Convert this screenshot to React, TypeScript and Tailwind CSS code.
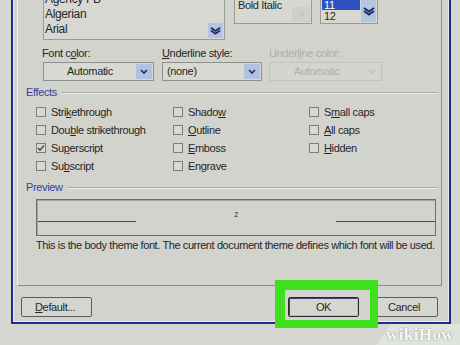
import type { ReactNode } from 'react';

const u = (s: string) => <span className="underline">{s}</span>;

function Arrow({ disabled }: { disabled?: boolean }) {
  return (
    <svg width="8" height="5" viewBox="0 0 8 5">
      <path
        d="M1 1 L4 4 L7 1"
        fill="none"
        stroke={disabled ? '#c3c3bf' : '#1c2c6a'}
        strokeWidth="1.6"
      />
    </svg>
  );
}

function DoubleChevron({ w, h }: { w: number; h: number }) {
  return (
    <svg width={w} height={h} viewBox="0 0 12 9">
      <path d="M1 1.5 L6 5 L11 1.5" fill="none" stroke="#1d2b66" strokeWidth="2" />
      <path d="M1 4.5 L6 8 L11 4.5" fill="none" stroke="#1d2b66" strokeWidth="2" />
    </svg>
  );
}

function Dropdown({
  width,
  text,
  center,
  disabled,
}: {
  width: string;
  text: string;
  center?: boolean;
  disabled?: boolean;
}) {
  return (
    <div
      className={`${width} h-[19px] flex border ${
        disabled ? 'border-[#c2c2bd] bg-[#d5d5cf]' : 'border-[#8f8f8b] bg-[#d9d9d3]'
      }`}
    >
      <div
        className={`flex-1 leading-[17px] ${center ? 'text-center' : 'pl-[4px]'} ${
          disabled ? 'text-[#aeaeaa]' : 'text-[#262626]'
        }`}
      >
        {text}
      </div>
      <div
        className={`w-[16px] my-px mr-px flex items-center justify-center ${
          disabled ? '' : 'bg-[#b2c0e2]'
        }`}
      >
        <Arrow disabled={disabled} />
      </div>
    </div>
  );
}

function Check({ label, checked }: { label: ReactNode; checked?: boolean }) {
  return (
    <div className="flex items-center h-[18px]">
      <div className="w-[10px] h-[10px] border border-[#7c7c78] bg-[#d9d9d3] flex items-center justify-center">
        {checked && (
          <svg width="8" height="8" viewBox="0 0 8 8">
            <path d="M1 4 L3 6.2 L7 1.5" fill="none" stroke="#2a5a2a" strokeWidth="1.5" />
          </svg>
        )}
      </div>
      <span className="ml-[5px] text-[#262626]">{label}</span>
    </div>
  );
}

function Heading({ text }: { text: string }) {
  return (
    <div className="h-[13px] flex items-center pl-[8px] pr-[3px]">
      <span className="text-[#37409a] leading-[13px]">{text}</span>
      <div className="flex-1 ml-[5px] border-t border-b border-t-[#abaaa5] border-b-[#ecece8]" />
    </div>
  );
}

export default function App() {
  return (
    <div className="w-[460px] h-[345px] overflow-hidden relative bg-[#d6d6d3] font-['Liberation_Sans',Arial,sans-serif] text-[11px] tracking-[-0.35px]">
      <div className="ml-[11px] w-[440px] h-[324px] border-x-2 border-b-2 border-[#202c8c] bg-[#d3d3cd]">
        <div className="h-full border-x border-b border-[#ebebe7] flex flex-col pl-[3px] pr-[6px]">
          {/* tab page */}
          <div className="h-[286px] border-l border-r border-b border-l-[#f0f0ec] border-r-[#8c8c88] border-b-[#8c8c88] flex flex-col">
            {/* font / style / size */}
            <div className="h-[40px] flex items-start">
              <div className="ml-[25px] w-[182px] h-[40px] border-x border-b border-[#9a9a96] bg-[#d8d8d2] flex overflow-hidden">
                <div className="flex-1 -mt-[8px] pl-[1px] text-[12px] text-[#262626]">
                  <div className="h-[15px] leading-[15px]">Agency FB</div>
                  <div className="h-[15px] leading-[15px]">Algerian</div>
                  <div className="h-[15px] leading-[15px]">Arial</div>
                </div>
                <div className="w-[15px] mr-px flex flex-col justify-end pb-px">
                  <div className="h-[15px] bg-[#b6c3e2] flex items-center justify-center">
                    <DoubleChevron w={11} h={9} />
                  </div>
                </div>
              </div>
              <div className="ml-[9px] w-[78px] h-[24px] border-x border-b border-[#9a9a96] bg-[#d8d8d2] flex">
                <div className="flex-1 pl-[3px] leading-[11px] text-[#262626]">Bold Italic</div>
                <div className="w-[18px] h-[15px] mt-[7px] mr-px bg-[#d0d0ca] flex items-center justify-center">
                  <Arrow disabled />
                </div>
              </div>
              <div className="ml-[8px] w-[58px] h-[24px] border-x border-b border-[#9a9a96] bg-[#d8d8d2] flex">
                <div className="flex-1 pl-px">
                  <div className="h-[10px] bg-[#2d52bf] text-white leading-[10px] pl-[2px] mr-px">11</div>
                  <div className="h-[13px] leading-[13px] pl-[2px] text-[#262626]">12</div>
                </div>
                <div className="w-[15px] h-[22px] mr-px bg-[#b6c3e2] flex items-center justify-center">
                  <DoubleChevron w={12} h={10} />
                </div>
              </div>
            </div>

            {/* labels */}
            <div className="mt-[7px] h-[13px] flex leading-[13px]">
              <div className="ml-[24px] w-[120px] text-[#262626]">
                Font c{u('o')}lor:
              </div>
              <div className="w-[107px] text-[#262626]">{u('U')}nderline style:</div>
              <div className="text-[#aeaeaa]">Underl{u('i')}ne color:</div>
            </div>

            {/* dropdowns */}
            <div className="mt-[2px] flex">
              <div className="ml-[25px]">
                <Dropdown width="w-[111px]" text="Automatic" center />
              </div>
              <div className="ml-[8px]">
                <Dropdown width="w-[100px]" text="(none)" />
              </div>
              <div className="ml-[7px]">
                <Dropdown width="w-[113px]" text="Automatic" center disabled />
              </div>
            </div>

            <div className="mt-[5px]">
              <Heading text="Effects" />
            </div>

            <div className="mt-[4px] pl-[18px] grid grid-cols-[137px_136px_1fr]">
              <Check label={<>Stri{u('k')}ethrough</>} />
              <Check label={<>Shado{u('w')}</>} />
              <Check label={<>S{u('m')}all caps</>} />
              <Check label={<>Dou{u('b')}le strikethrough</>} />
              <Check label={<>{u('O')}utline</>} />
              <Check label={<>{u('A')}ll caps</>} />
              <Check label={<>Su{u('p')}erscript</>} checked />
              <Check label={<>{u('E')}mboss</>} />
              <Check label={<>{u('H')}idden</>} />
              <Check label={<>Su{u('b')}script</>} />
              <Check label={<>En{u('g')}rave</>} />
              <div />
            </div>

            <div className="mt-[6px]">
              <Heading text="Preview" />
            </div>

            <div className="mt-[5px] ml-[18px] w-[400px] h-[37px] border border-[#6f6f6c]">
              <div className="h-full border-t border-l border-[#a4a49f] flex items-start">
                <div className="w-[98px] h-px mt-[20px] bg-[#4a4a48]" />
                <div className="flex-1 text-center text-[7px] leading-[7px] mt-[10px] text-[#222]">2</div>
                <div className="w-[99px] h-px mt-[20px] bg-[#4a4a48]" />
              </div>
            </div>

            <div className="mt-[3px] pl-[18px] h-[13px] leading-[13px] text-[#262626] tracking-[-0.4px]">
              This is the body theme font. The current document theme defines which font will be used.
            </div>
          </div>

          {/* buttons */}
          <div className="mt-[11px] h-[20px] flex pl-[4px] pr-[4px]">
            <button className="w-[71px] h-[20px] border border-[#5c5c5a] rounded-[2px] bg-[#d6d6d0] text-[#262626] text-left pl-[13px] leading-[18px]">
              {u('D')}efault...
            </button>
            <button className="ml-auto w-[71px] h-[20px] border border-[#2a2a32] rounded-[2px] bg-[#d6d6d0] text-[#262626] leading-[16px] p-0">
              <div className="h-full border border-[#3e4372] border-r-[#b8b8b4] border-b-[#b8b8b4]">OK</div>
            </button>
            <button className="ml-[11px] w-[68px] h-[20px] border border-[#5c5c5a] rounded-[2px] bg-[#d6d6d0] text-[#262626] leading-[18px]">
              Cancel
            </button>
          </div>
        </div>
      </div>

      {/* highlight box */}
      <div className="absolute left-[275px] top-[280px] w-[103px] h-[48px] border-[#3fdf1e] border-t-[10px] border-l-[10px] border-r-[8px] border-b-[8px]" />

      {/* watermark */}
      <svg className="absolute left-0 top-0" width="460" height="345">
        <polygon points="376,345 391,324 460,324 460,345" fill="#dfe5dc" />
      </svg>
      <div className="absolute left-[386px] top-[326px] text-[17px] leading-[18px] font-bold tracking-[0.4px] font-['Liberation_Serif',serif] text-[#fafaf8] [text-shadow:0_0_1.5px_#6e6e6c]">
        wikiHow
      </div>
    </div>
  );
}
